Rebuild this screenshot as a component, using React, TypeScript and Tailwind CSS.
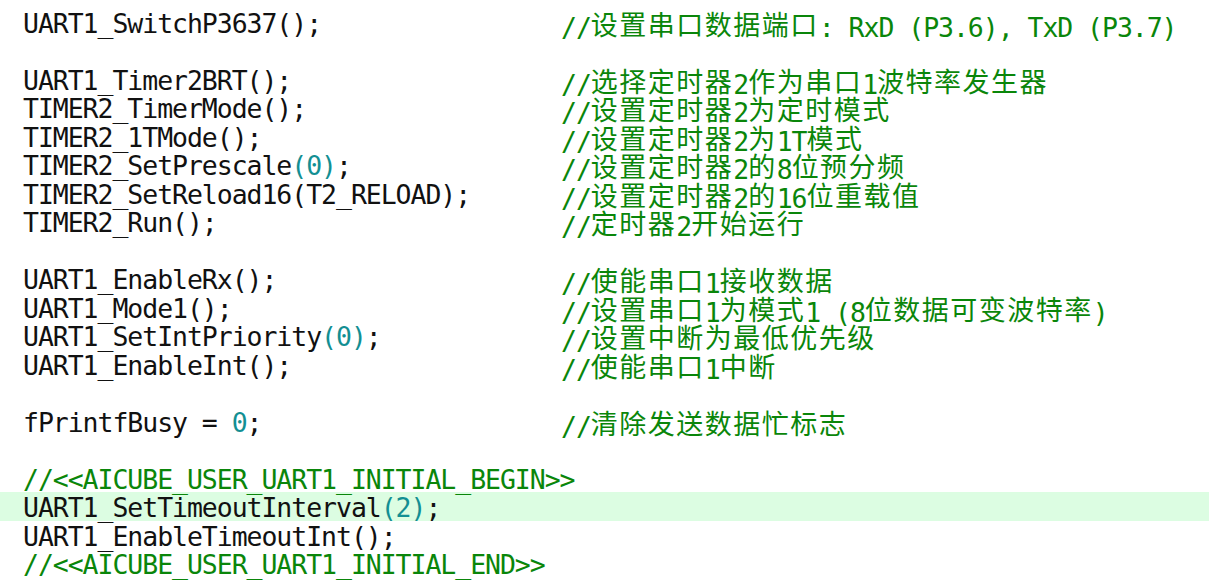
import React from 'react';

type Line = { code?: string; comment?: string; green?: boolean; active?: boolean };

const lines: Line[] = [
  { code: 'UART1_SwitchP3637();', comment: '//设置串口数据端口: RxD (P3.6), TxD (P3.7)' },
  {},
  { code: 'UART1_Timer2BRT();', comment: '//选择定时器2作为串口1波特率发生器' },
  { code: 'TIMER2_TimerMode();', comment: '//设置定时器2为定时模式' },
  { code: 'TIMER2_1TMode();', comment: '//设置定时器2为1T模式' },
  { code: 'TIMER2_SetPrescale(0);', comment: '//设置定时器2的8位预分频' },
  { code: 'TIMER2_SetReload16(T2_RELOAD);', comment: '//设置定时器2的16位重载值' },
  { code: 'TIMER2_Run();', comment: '//定时器2开始运行' },
  {},
  { code: 'UART1_EnableRx();', comment: '//使能串口1接收数据' },
  { code: 'UART1_Mode1();', comment: '//设置串口1为模式1 (8位数据可变波特率)' },
  { code: 'UART1_SetIntPriority(0);', comment: '//设置中断为最低优先级' },
  { code: 'UART1_EnableInt();', comment: '//使能串口1中断' },
  {},
  { code: 'fPrintfBusy = 0;', comment: '//清除发送数据忙标志' },
  {},
  { code: '//<<AICUBE_USER_UART1_INITIAL_BEGIN>>', green: true },
  { code: 'UART1_SetTimeoutInterval(2);', active: true },
  { code: 'UART1_EnableTimeoutInt();' },
  { code: '//<<AICUBE_USER_UART1_INITIAL_END>>', green: true },
];

// latin runs stay in the narrow mono face, CJK runs get a wider face sitting on the baseline
function Mixed({ text }: { text: string }) {
  const parts = text.split(/([\u3000-\u9fff\uff00-\uffef]+)/).filter(Boolean);
  return (
    <>
      {parts.map((p, i) =>
        /[\u3000-\u9fff\uff00-\uffef]/.test(p) ? (
          <span key={i} className="font-['Noto_Sans_CJK_SC',sans-serif] text-[27px] tracking-[1.5px] align-[2px]">
            {p}
          </span>
        ) : (
          <span key={i}>{p}</span>
        )
      )}
    </>
  );
}

function Code({ text }: { text: string }) {
  const parts = text.split(/(\(\d+\)|\b\d+\b)/).filter(Boolean);
  return (
    <>
      {parts.map((p, i) =>
        /^(\(\d+\)|\d+)$/.test(p) ? (
          <span key={i} className="text-[#138f93]">{p}</span>
        ) : (
          <span key={i}>{p}</span>
        )
      )}
    </>
  );
}

export default function App() {
  return (
    <div className="w-[1209px] h-[585px] bg-white overflow-hidden pt-[7.5px] font-['DejaVu_Sans_Mono',monospace] text-[26.5px] tracking-[-1.05px] text-[#111]">
      {lines.map((l, i) => (
        <div
          key={i}
          className={`flex h-[28.5px] leading-[28.5px] pl-[23px] pt-[2px] whitespace-pre ${l.active ? 'bg-[#dcfde2]' : ''}`}
        >
          <div className={`w-[538px] shrink-0 ${l.green ? 'text-[#0a860a]' : ''}`}>
            {l.code ? l.green ? l.code : <Code text={l.code} /> : ''}
          </div>
          {l.comment && (
            <div className="text-[#0a860a]">
              <Mixed text={l.comment} />
            </div>
          )}
        </div>
      ))}
    </div>
  );
}
